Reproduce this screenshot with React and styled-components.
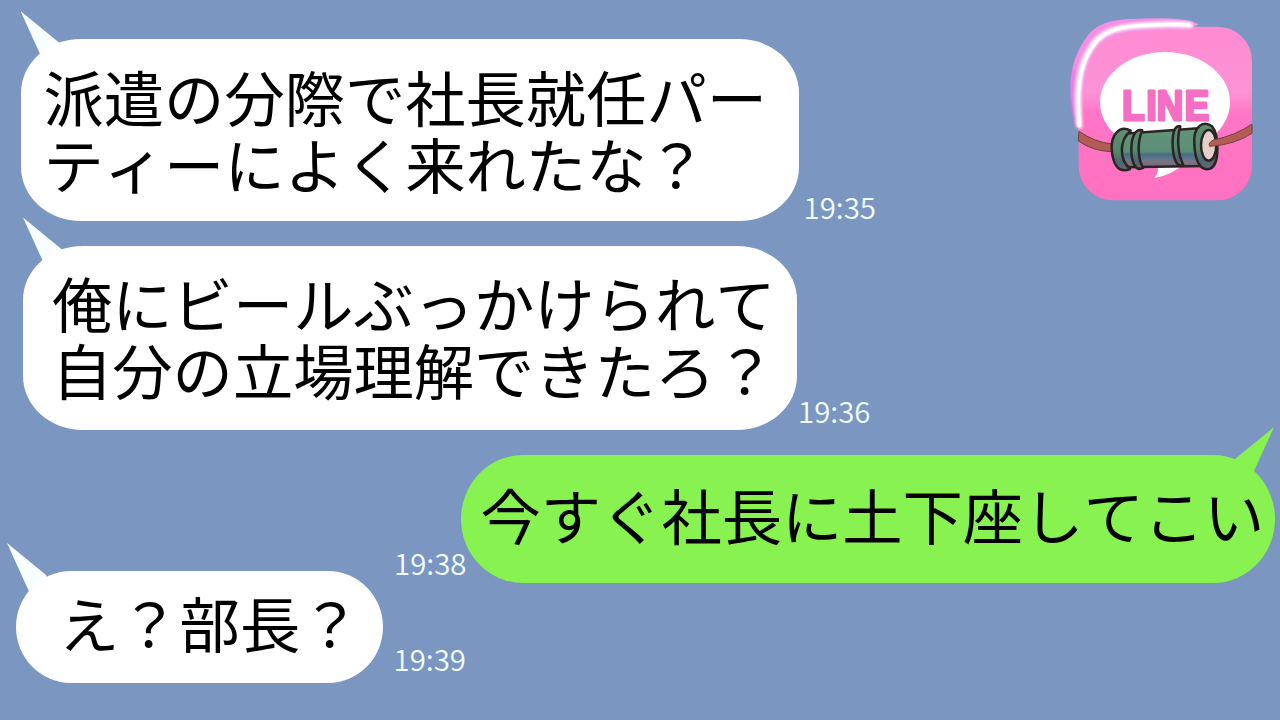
import React from 'react';
import styled, { createGlobalStyle } from 'styled-components';

const GlobalStyle = createGlobalStyle`
    * {
        box-sizing: border-box;
    }

    body {
        margin: 0;
        background: #7a96c1;
        font-family: "Noto Sans CJK JP", "Noto Sans", sans-serif;
    }
`;

const Chat = styled.main`
    width: 1280px;
    height: 720px;
    overflow: hidden;
    background: #7a96c1;
`;

const TopArea = styled.div`
    display: flex;
    justify-content: space-between;
    align-items: flex-start;
    padding: 10px 20px 0 0;
`;

const Thread = styled.div`
    display: flex;
    flex-direction: column;
    gap: 25px;
    padding-top: 29px;
`;

const Row = styled.div`
    display: flex;
    align-items: flex-end;
    isolation: isolate;
    flex-direction: ${props => (props.$mine ? 'row-reverse' : 'row')};
    padding-left: ${props => props.$left || 0}px;
    padding-right: ${props => props.$right || 0}px;
    margin-top: ${props => props.$top || 0}px;
`;

const Bubble = styled.div`
    position: relative;
    width: ${props => props.$width}px;
    height: ${props => props.$height}px;
    padding: ${props => props.$padding};
    border-radius: ${props => props.$radius};
    background: ${props => (props.$mine ? '#87f250' : '#ffffff')};
    flex-shrink: 0;
`;

const Text = styled.p`
    margin: 0;
    font-size: 60.3px;
    line-height: 67px;
    font-kerning: none;
    color: #000;
    white-space: pre;
`;

const Tail = styled.span`
    position: absolute;
    z-index: -1;
    top: -28px;
    left: ${props => (props.$mine ? 'auto' : `${props.$offset || 0}px`)};
    right: ${props => (props.$mine ? '1px' : 'auto')};
    width: 50px;
    height: 55px;
    background: ${props => (props.$mine ? '#87f250' : '#f8fdff')};
    clip-path: polygon(0 0, 39px 32px, 50px 55px, 25px 55px);
    transform: ${props => (props.$mine ? 'scaleX(-1)' : 'none')};
`;

const Time = styled.time`
    font-size: 29.4px;
    line-height: 30px;
    font-weight: 350;
    color: #f2fdff;
    margin: ${props => props.$margin};
`;

const AppIcon = styled.svg`
    width: 200px;
    height: 200px;
    flex-shrink: 0;
`;

function Message({ mine, lines, time, width, height, padding, radius, timeMargin, tailOffset, ...place }) {
    return (
        <Row $mine={mine} $left={place.left} $right={place.right} $top={place.top}>
            <Bubble $mine={mine} $width={width} $height={height} $padding={padding} $radius={radius}>
                <Tail $mine={mine} $offset={tailOffset} />
                {lines.map(line => <Text key={line}>{line}</Text>)}
            </Bubble>
            <Time $margin={timeMargin}>{time}</Time>
        </Row>
    );
}

function LineIcon() {
    return (
        <AppIcon viewBox="0 0 600 600">
            <defs>
                <linearGradient id="pink" x1="0" y1="0" x2="0" y2="1">
                    <stop offset="0" stopColor="#ff8bd2" />
                    <stop offset="0.38" stopColor="#fc92d6" />
                    <stop offset="0.5" stopColor="#ff76c6" />
                    <stop offset="1" stopColor="#ff70c0" />
                </linearGradient>
                <linearGradient id="barrel" x1="0" y1="0" x2="0" y2="1">
                    <stop offset="0" stopColor="#639578" />
                    <stop offset="0.6" stopColor="#5a8e76" />
                    <stop offset="0.66" stopColor="#466f86" />
                    <stop offset="0.78" stopColor="#5e7387" />
                    <stop offset="0.84" stopColor="#7b7484" />
                    <stop offset="1" stopColor="#75687a" />
                </linearGradient>
                <linearGradient id="rim" x1="0" y1="0" x2="0" y2="1">
                    <stop offset="0" stopColor="#5f9074" />
                    <stop offset="0.55" stopColor="#55866e" />
                    <stop offset="0.8" stopColor="#4c6672" />
                    <stop offset="1" stopColor="#6c6672" />
                </linearGradient>
                <filter id="soft" x="-20%" y="-20%" width="140%" height="140%">
                    <feGaussianBlur stdDeviation="5" />
                </filter>
            </defs>
            <rect x="56" y="50" width="520" height="521" rx="103" fill="url(#pink)" />
            {/* glossy edge along the upper left corner */}
            <path d="M50 352C20 245 27 155 76 87C105 42 150 28 220 27C300 23 386 24 415 43C409 54 366 58 315 61C229 62 165 66 118 108C74 162 68 235 66 358Z" fill="#f58fe3" />
            <path d="M42 180C30 235 34 290 50 345" fill="none" stroke="#e070e2" strokeWidth="7" filter="url(#soft)" />
            <path d="M95 122C130 72 190 66 270 62" fill="none" stroke="#f590dc" strokeWidth="8" filter="url(#soft)" />
            <path d="M58 346C50 250 52 170 98 106C126 64 172 53 225 48C300 41 345 42 390 45" fill="none" stroke="#fff" strokeWidth="17" strokeLinecap="round" filter="url(#soft)" />
            <path d="M58 346C51 250 54 168 101 106C129 64 172 53 225 48C300 42 345 41 386 45" fill="none" stroke="#fff" strokeWidth="9" strokeLinecap="round" />
            <ellipse cx="315" cy="277" rx="195" ry="151" fill="#fff" />
            <path d="M290 465Q301 482 283 504Q337 496 373 460Z" fill="#fff" />
            <text x="212 295 330 425" y="331" transform="scale(0.88 1)" fontFamily="Liberation Sans, sans-serif" fontWeight="700" fontSize="125" fill="#f46fc3" stroke="#f46fc3" strokeWidth="9" strokeLinejoin="round">LINE</text>
            <path d="M57 364Q105 397 157 402V425Q99 424 55 393Z" fill="#b35c55" stroke="#70413b" strokeWidth="3" />
            <g stroke="#2a2521" strokeWidth="7.5" strokeLinejoin="round">
                <path d="M180 372L426 354L436 468L188 472Z" fill="url(#barrel)" />
                <path d="M212 362C178 344 153 375 155 417C158 462 175 492 210 477C176 447 178 390 212 362Z" fill="url(#rim)" />
                <path d="M247 361C224 355 214 385 214 418C214 456 226 486 249 474C232 442 232 394 247 361Z" fill="url(#rim)" />
                <path d="M361 349C342 344 337 374 338 407C340 446 350 474 370 465C353 432 350 383 361 349Z" fill="url(#rim)" />
                <path d="M456 349C426 328 400 354 403 399C404 448 419 486 451 476C480 462 477 374 456 349Z" fill="url(#rim)" />
                <ellipse cx="446" cy="406" rx="23" ry="46" fill="#e6cfca" />
            </g>
            <path d="M576 342Q528 376 460 390Q443 399 449 409Q525 404 576 370Z" fill="#b35c55" stroke="#70413b" strokeWidth="3" />
        </AppIcon>
    );
}

export default function App() {
    return (
        <>
            <GlobalStyle />
            <Chat>
                <TopArea>
                    <Thread>
                        <Message
                            left={20.5} width={778} height={181.5}
                            padding="23px 0 0 23px" radius="60px / 54px"
                            lines={['派遣の分際で社長就任パー', 'ティーによく来れたな？']}
                            time="19:35" timeMargin="0 0 0 5px"
                        />
                        <Message
                            left={23} width={774} height={184.5}
                            padding="22px 0 0 29px" radius="60px / 54px"
                            lines={['俺にビールぶっかけられて', '自分の立場理解できたろ？']}
                            time="19:36" timeMargin="0 0 5px 1px"
                        />
                    </Thread>
                    <LineIcon />
                </TopArea>
                <Message
                    mine top={25} right={5.5} width={814} height={128}
                    padding="25px 0 0 20px" radius="62px / 64px"
                    lines={['今すぐ社長に土下座してこい']}
                    time="19:38" timeMargin="0 -6px 6px 0"
                />
                <Message
                    left={16} top={-12} width={366.5} height={112} tailOffset={-9}
                    padding="17px 0 0 43px" radius="55px / 56px"
                    lines={['え？部長？']}
                    time="19:39" timeMargin="0 0 10px 11px"
                />
            </Chat>
        </>
    );
}
